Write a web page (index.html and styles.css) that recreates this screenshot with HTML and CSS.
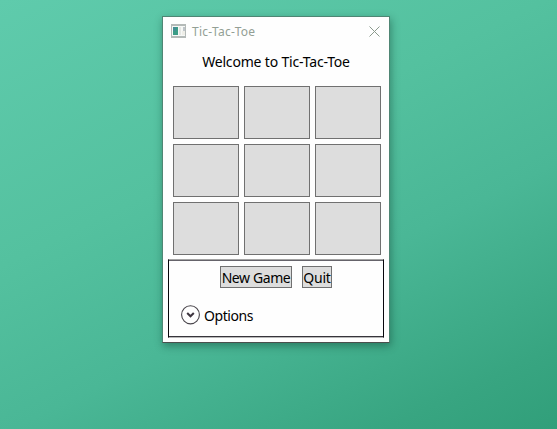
FILE: index.html
```html
<!DOCTYPE html>
<html lang="en">
<head>
<meta charset="utf-8">
<title>Tic-Tac-Toe</title>
<link rel="stylesheet" href="styles.css">
</head>
<body>
<main class="window">
  <header class="titlebar">
    <svg class="app-icon" width="16" height="15" viewBox="0 0 16 15" shape-rendering="crispEdges">
      <rect x="0" y="0" width="15" height="14" fill="#b4bab8"/>
      <rect x="1" y="2" width="13" height="10" fill="#f6f8f6"/>
      <rect x="2" y="3" width="5" height="8" fill="#3b9c86"/>
      <rect x="2" y="3" width="3" height="4" fill="#438d94"/>
      <rect x="8" y="3" width="2" height="8" fill="#e4e6e2"/>
      <rect x="12" y="3" width="2" height="4" fill="#bfc5ca"/>
      <rect x="11" y="7" width="3" height="4" fill="#eeeee8"/>
    </svg>
    <span class="title">Tic-Tac-Toe</span>
    <svg class="close" width="11" height="11" viewBox="0 0 11 11">
      <path d="M.5.5l10 10M10.5.5l-10 10" fill="none" stroke="#8b9a8d" stroke-width="1"/>
    </svg>
  </header>
  <p class="message">Welcome to Tic-Tac-Toe</p>
  <div class="board">
    <button class="cell"></button><button class="cell"></button><button class="cell"></button>
    <button class="cell"></button><button class="cell"></button><button class="cell"></button>
    <button class="cell"></button><button class="cell"></button><button class="cell"></button>
  </div>
  <section class="panel">
    <div class="actions">
      <button class="action new-game">New Game</button>
      <button class="action quit">Quit</button>
    </div>
    <div class="expander">
      <svg width="19" height="20" viewBox="0 0 19 20" fill="none">
        <ellipse cx="9.5" cy="9.8" rx="8.9" ry="9.1" stroke="#48444a" stroke-width="1.1"/>
        <path d="M6.2 8l3.3 3.3L12.8 8" stroke="#3c343e" stroke-width="2"/>
      </svg>
      <span class="options">Options</span>
    </div>
  </section>
</main>
</body>
</html>
```
FILE: styles.css
```css
* { box-sizing: border-box; }

body {
  margin: 0;
  width: 557px;
  height: 429px;
  padding: 16px 0 0 162px;
  overflow: hidden;
  background: linear-gradient(154deg, #5fcbac 0%, #54c19f 38%, #4ab796 62%, #38a581 88%, #319f7a 100%);
  font: 14px/20px "Noto Sans", "Open Sans", sans-serif;
  color: #000;
}

.window {
  width: 228px;
  height: 327px;
  background: #fefefe;
  border: 1px solid #4f8674;
  border-bottom-color: #4a4f4d;
  box-shadow: 1px 3px 8px rgba(10, 50, 38, .42);
}

.titlebar {
  display: flex;
  align-items: center;
  height: 29px;
  padding: 0 9px 0 8px;
}

.app-icon { margin-top: -1px; }

.title {
  margin-left: 5px;
  font-size: 12px;
  letter-spacing: .27px;
  color: #939f95;
}

.close { margin-left: auto; margin-top: -1px; }

.message {
  margin: 6px 0 0;
  height: 34px;
  text-align: center;
  letter-spacing: -.18px;
}

.board {
  display: grid;
  grid-template-columns: repeat(3, 66px);
  grid-auto-rows: 53px;
  gap: 5px;
  margin-left: 10px;
}

.cell, .action {
  margin: 0;
  padding: 0;
  background: #ddd;
  border: 1px solid #707070;
  border-radius: 0;
  font: inherit;
  color: #000;
}

.panel {
  width: 216px;
  height: 79px;
  margin: 4px 0 0 5px;
  border: 1px solid #08060c;
  border-top-color: #a4a4a4;
  border-bottom-color: #b8b8b8;
  box-shadow: inset 0 1px #65636a, inset 0 -1px #37343b;
}

.actions {
  display: flex;
  gap: 10px;
  padding: 6px 0 0 51px;
}

.action {
  height: 22px;
  line-height: 22px;
  white-space: nowrap;
}

.new-game { width: 72px; letter-spacing: -.4px; }
.quit { width: 30px; letter-spacing: -.2px; }

.expander {
  display: flex;
  align-items: center;
  gap: 4px;
  margin: 17px 0 0 12px;
}

.options {
  padding-top: 2px;
  letter-spacing: -.45px;
  line-height: 18px;
}
```
